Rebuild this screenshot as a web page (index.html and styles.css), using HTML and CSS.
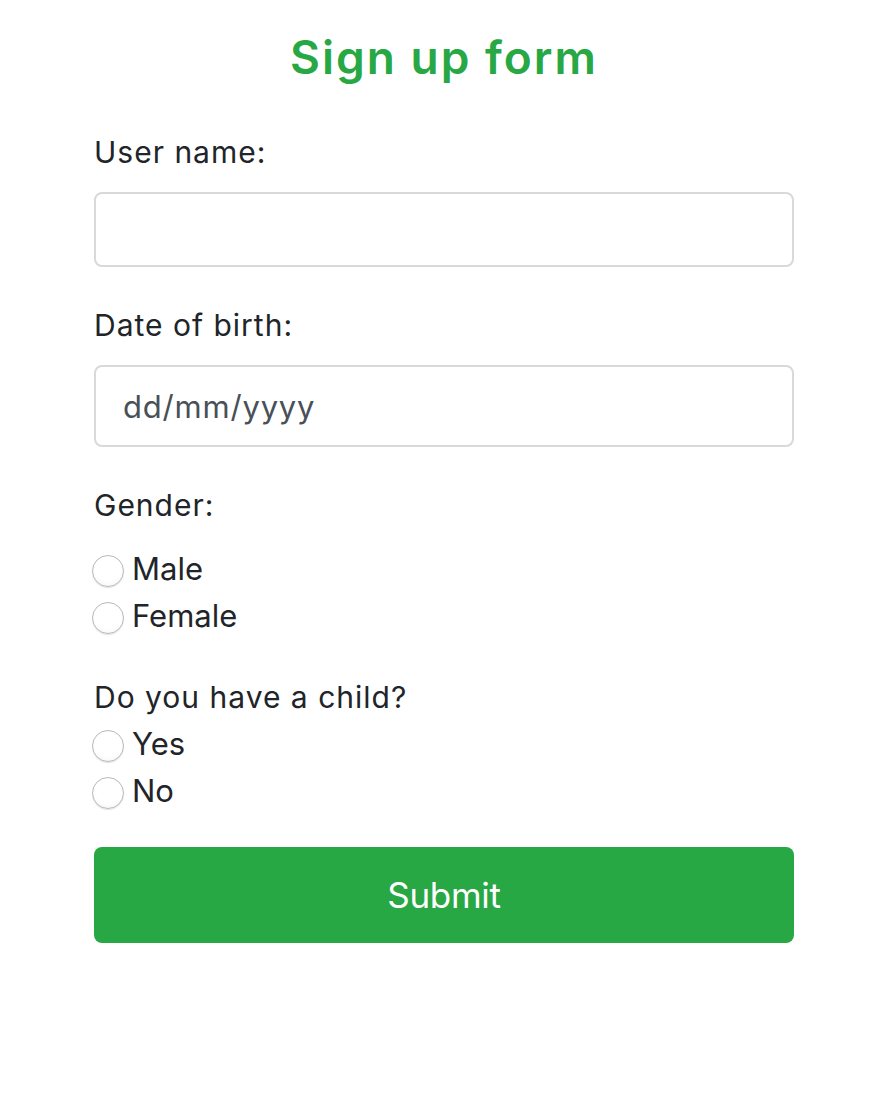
FILE: index.html
```html
<!DOCTYPE html>
<html lang="en">
<head>
<meta charset="utf-8">
<title>Sign up form</title>
<link rel="stylesheet" href="styles.css">
</head>
<body>
<div class="container">
  <h1 class="title">Sign up form</h1>
  <form class="form">
    <div class="group">
      <label class="label" for="username">User name:</label>
      <input class="field field-text" id="username" type="text">
    </div>
    <div class="group">
      <label class="label" for="dob">Date of birth:</label>
      <input class="field field-date" id="dob" type="text" placeholder="dd/mm/yyyy">
    </div>
    <div class="group">
      <div class="label">Gender:</div>
      <div class="options options-gender">
        <label class="option"><input class="radio" type="radio" name="gender"><span>Male</span></label>
        <label class="option"><input class="radio" type="radio" name="gender"><span>Female</span></label>
      </div>
    </div>
    <div class="group group-last">
      <div class="label">Do you have a child?</div>
      <div class="options options-child">
        <label class="option"><input class="radio" type="radio" name="child"><span>Yes</span></label>
        <label class="option"><input class="radio" type="radio" name="child"><span>No</span></label>
      </div>
    </div>
    <button class="submit" type="button">Submit</button>
  </form>
</div>
</body>
</html>
```
FILE: styles.css
```css
html, body {
  margin: 0;
  padding: 0;
  background: #ffffff;
}
body {
  font-family: Inter, "Helvetica Neue", "Liberation Sans", Arial, sans-serif;
  color: #212529;
}
.container {
  width: 700px;
  margin-left: 94px;
  padding-top: 30px;
}
.title {
  margin: 0;
  font-size: 46px;
  line-height: 54px;
  font-weight: 600;
  color: #28a745;
  text-align: center;
  letter-spacing: 2px;
}
.form {
  display: flex;
  flex-direction: column;
  margin-top: 50px;
}
.group {
  display: flex;
  flex-direction: column;
  margin-bottom: 40px;
}
.group-last {
  margin-bottom: 33px;
}
.label {
  display: block;
  font-size: 30px;
  line-height: 36px;
  font-weight: 400;
  letter-spacing: 1px;
  color: #212529;
}
.field {
  box-sizing: border-box;
  width: 700px;
  margin-top: 22px;
  border: 2px solid #d9d9d9;
  border-radius: 8px;
  background: #fff;
  font-family: inherit;
  font-size: 31px;
  letter-spacing: 0.8px;
  color: #495057;
  padding: 0 27px;
  outline: none;
}
.field-text {
  height: 75px;
}
.field-date {
  height: 82px;
}
.field::placeholder {
  color: #495057;
  opacity: 1;
}
.options {
  display: flex;
  flex-direction: column;
}
.options-gender {
  margin-top: 22px;
}
.options-child {
  margin-top: 5px;
}
.option {
  display: flex;
  align-items: center;
  height: 47px;
  font-size: 31px;
  line-height: 47px;
  color: #212529;
}
.radio {
  -webkit-appearance: none;
  appearance: none;
  box-sizing: border-box;
  width: 32px;
  height: 32px;
  margin: 5px 8px 0 -2px;
  border-radius: 50%;
  border: 1.5px solid #b9b9b9;
  background: radial-gradient(circle at 50% 35%, #ffffff 55%, #f4f4f4 100%);
  box-shadow: 0 1px 1px rgba(0, 0, 0, 0.12);
  flex: none;
}
.submit {
  box-sizing: border-box;
  width: 700px;
  height: 96px;
  border: none;
  border-radius: 8px;
  background: #28a745;
  color: #ffffff;
  font-family: inherit;
  font-size: 35px;
  font-weight: 400;
  display: flex;
  align-items: center;
  justify-content: center;
  padding: 0;
  letter-spacing: -0.3px;
}
```
